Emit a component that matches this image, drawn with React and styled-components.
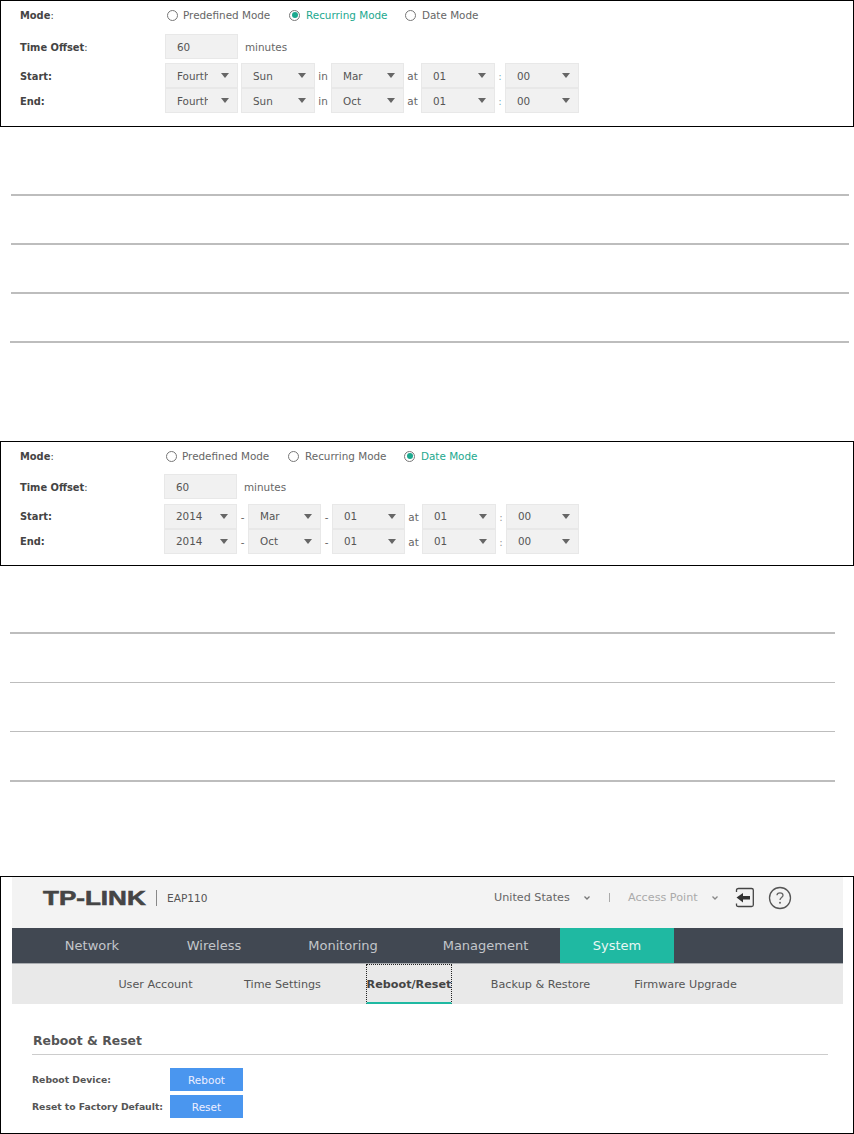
import React from 'react';
import styled, { createGlobalStyle } from 'styled-components';

const Global = createGlobalStyle`
  html, body { margin: 0; padding: 0; background: #fff; }
  body { font-family: "DejaVu Sans", Verdana, sans-serif; font-size: 10px; color: #555; }
`;
const Page = styled.div`display: flex; flex-direction: column; width: 854px; height: 1134px; overflow: hidden;`;
const Panel = styled.section`
  box-sizing: border-box; border: 1px solid #000; width: 854px; height: ${p => p.$h}px; margin-top: ${p => p.$mt}px;
  padding: ${p => p.$pt}px 0 0 19px; display: flex; flex-direction: column;
`;
const ModeRow = styled.div`display: flex; align-items: center; height: 16px; margin-bottom: ${p => p.$mb}px;`;
const Row = styled.div`display: flex; align-items: center; height: ${p => p.$h || 25}px; margin-bottom: ${p => p.$mb || 0}px;`;
const Label = styled.div`width: ${p => p.$w}px; flex: none; font-weight: 700; color: #444; font-size: 9.9px; padding-top: ${p => p.$top || 0}px; span{font-weight:400;}`;
const Radio = styled.div`
  display: flex; align-items: center; width: ${p => p.$w}px; margin-left: ${p => p.$ml || 0}px; flex: none; font-size: 10.4px; white-space: nowrap; color: ${p => p.$on ? '#1ca88e' : '#666'};
`;
const Dot = styled.i`
  box-sizing: border-box; width: 11px; height: 11px; border-radius: 50%; border: 1px solid #777; background: #fff; margin-right: ${p => p.$gap}px; flex: none; position: relative;
  &::after { content: ''; display: ${p => p.$on ? 'block' : 'none'}; position: absolute; inset: 1.5px; border-radius: 50%; background: #1ca88e; }
`;
const Input = styled.div`
  box-sizing: border-box; width: 73px; height: 25px; background: #f1f1f1; border: 1px solid #e8e8e8; padding-left: 11px; font-size: 10.4px; line-height: 24px; color: #555; flex: none;
`;
const Unit = styled.div`margin-left: 7px; padding-top: 1px; font-size: 10.4px; color: #666;`;
const Select = styled.div`
  box-sizing: border-box; position: relative; width: ${p => p.$w || 74}px; height: 25px; flex: none; background: #f1f1f1; border: 1px solid #e8e8e8; padding-left: 11px; font-size: 10.4px; line-height: ${p => p.$lh}px; color: #555;
  &::after { content: ''; position: absolute; right: 8px; top: 9px; border-left: 4.5px solid transparent; border-right: 4.5px solid transparent; border-top: 5.5px solid #666; }
`;
const Clip = styled.span`display: block; width: 31px; overflow: hidden; white-space: nowrap;`;
const Sep = styled.div`width: ${p => p.$w}px; flex: none; text-align: center; padding-top: ${p => p.$top}px; font-size: 10.4px; color: ${p => p.$tone || '#666'};`;

const Rules = styled.div`display: flex; flex-direction: column; margin: ${p => p.$mt}px 0 0 ${p => p.$ml}px; width: ${p => p.$w}px;`;
const Rule = styled.div`height: ${p => p.$t}px; background: #bdbdbd; margin-bottom: ${p => p.$gap}px; margin-left: ${p => p.$in || 0}px;`;

const Frame = styled.section`
  box-sizing: border-box; border: 1px solid #000; width: 854px; height: 258px; margin-top: 94px; padding: 0 10px 0 11px;
`;
const Head = styled.header`box-sizing: border-box; height: 51px; padding: 0 0 10px 31px; background: #f3f3f3; display: flex; align-items: center;`;
const Logo = styled.div`font-family: "Liberation Sans", sans-serif; font-weight: 700; font-size: 20.5px; color: #454545; transform: scaleX(1.27); transform-origin: left; width: 103px; -webkit-text-stroke: .6px #454545; line-height: 20px; white-space: nowrap;`;
const Model = styled.div`border-left: 1px solid #888; margin-left: 10px; padding-left: 10px; height: 16px; line-height: 16px; font-size: 10.6px; color: #555;`;
const HeadRight = styled.div`margin-left: auto; display: flex; align-items: center; margin-right: 51px; font-size: 11.2px; color: #666;`;
const Drop = styled.div`color: ${p => p.$dim ? '#aaa' : '#666'}; width: ${p => p.$w}px; flex: none; white-space: nowrap;`;
const Pipe = styled.div`width: 1px; height: 9px; background: #aaa; margin: 0 18px 0 0;`;
const Nav = styled.nav`box-sizing: border-box; height: 36px; background: #414852; border-bottom: 1px solid #a9acb0; display: flex; padding-left: 19px;`;
const Tab = styled.div`width: ${p => p.$w}px; flex: none; text-align: center; line-height: 35px; font-size: 13px; color: ${p => p.$on ? '#e8f7f4' : '#c3c6ca'}; background: ${p => p.$on ? '#1fb9a2' : 'transparent'};`;
const Sub = styled.div`height: 40px; background: #e9e9e9; display: flex; padding-left: 100px;`;
const SubItem = styled.div`
  box-sizing: border-box; width: ${p => p.$w}px; flex: none; display: flex; justify-content: center; line-height: 41px; font-size: 11.2px; color: #555; white-space: nowrap;
`;
const SubActive = styled(SubItem)`
  font-weight: 700; color: #444; border: 1px dotted #222; border-bottom: 2px solid #1fb9a2; line-height: 39px;
`;
const Content = styled.div`padding: 27px 15px 0 20px;`;
const Title = styled.h2`margin: 0; font-size: 12.4px; font-weight: 700; color: #555; line-height: 20px; padding: 0 0 3px 1px; border-bottom: 1px solid #ccc;`;
const Action = styled.div`display: flex; align-items: center; height: 23px; margin-top: ${p => p.$mt}px;`;
const ActionLabel = styled.div`width: 138px; flex: none; font-size: 9.25px; font-weight: 700; color: #555; white-space: nowrap;`;
const Btn = styled.button`width: 73px; height: 23px; border: 0; padding: 0; background: #4a96ef; color: #eef; font: 10.5px "DejaVu Sans", sans-serif;`;

const Form = ({ mode, labelW, radios, rows, h, mt, pt, modeGap, offsetGap, tone, rowTop, selectLh }) => (
  <Panel $h={h} $mt={mt} $pt={pt}>
    <ModeRow $mb={modeGap}>
      <Label $w={labelW}>Mode<span>:</span></Label>
      {radios.map(r => (
        <Radio key={r.t} $w={r.w} $ml={r.ml} $on={r.t === mode}>
          <Dot $on={r.t === mode} $gap={r.g} />{r.t}
        </Radio>
      ))}
    </ModeRow>
    <Row $mb={offsetGap}>
      <Label $w={labelW} $top={1}>Time Offset<span>:</span></Label>
      <Input>60</Input><Unit>minutes</Unit>
    </Row>
    {rows.map(row => (
      <Row key={row.label}>
        <Label $w={labelW} $top={rowTop}>{row.label}</Label>
        {row.cells.map((c, i) => c.sep !== undefined
          ? <Sep key={i} $w={c.w} $top={rowTop} $tone={c.colon ? tone : undefined}>{c.sep}</Sep>
          : <Select key={i} $w={c.sw} $lh={selectLh}>{c.clip ? <Clip>{c.v}</Clip> : c.v}</Select>)}
      </Row>
    ))}
  </Panel>
);

const recRow = (label, mon) => ({ label, cells: [
  { v: 'Fourth', clip: true, sw: 73 }, { sep: '', w: 3 }, { v: 'Sun' }, { sep: 'in', w: 16 }, { v: mon, sw: 73 },
  { sep: 'at', w: 17 }, { v: '01' }, { sep: ':', w: 10, colon: true }, { v: '00' },
] });
const dateRow = (label, mon) => ({ label, cells: [
  { v: '2014', sw: 73 }, { sep: '-', w: 11 }, { v: mon, sw: 73 }, { sep: '-', w: 11 }, { v: '01', sw: 73 },
  { sep: 'at', w: 17 }, { v: '01' }, { sep: ':', w: 10, colon: true }, { v: '00', sw: 73 },
] });

export default function App() {
  return (
    <Page>
      <Global />
      <Form mode="Recurring Mode" labelW={145} h={127} mt={0} pt={6} modeGap={11} offsetGap={4} tone="#7fb0bd" rowTop={1} selectLh={24}
        radios={[{ t: 'Predefined Mode', w: 122, ml: 2, g: 5 }, { t: 'Recurring Mode', w: 116, g: 6 }, { t: 'Date Mode', w: 80, g: 6 }]}
        rows={[recRow('Start:', 'Mar'), recRow('End:', 'Oct')]} />
      <Rules $mt={67} $ml={10} $w={839}>
        <Rule $t={2} $gap={47} $in={1} /><Rule $t={2} $gap={47} $in={1} /><Rule $t={2} $gap={47} $in={1} /><Rule $t={2} $gap={0} />
      </Rules>
      <Form mode="Date Mode" labelW={144} h={125} mt={98} pt={6} modeGap={10} offsetGap={5} tone="#999" rowTop={0} selectLh={22}
        radios={[{ t: 'Predefined Mode', w: 122, ml: 2, g: 5 }, { t: 'Recurring Mode', w: 116, g: 6 }, { t: 'Date Mode', w: 80, g: 6 }]}
        rows={[dateRow('Start:', 'Mar'), dateRow('End:', 'Oct')]} />
      <Rules $mt={66} $ml={10} $w={825}>
        <Rule $t={2} $gap={48} /><Rule $t={1} $gap={48} /><Rule $t={1} $gap={48} /><Rule $t={2} $gap={0} />
      </Rules>
      <Frame>
        <Head>
          <Logo>TP-LINK</Logo>
          <Model>EAP110</Model>
          <HeadRight>
            <Drop $w={89}>United States</Drop>
            <svg width="8" height="6" viewBox="0 0 8 6" style={{ marginRight: 18 }}><path d="M1.5 1.5 4 4l2.5-2.5" fill="none" stroke="#777" strokeWidth="1.3" /></svg>
            <Pipe />
            <Drop $w={83} $dim>Access Point</Drop>
            <svg width="8" height="6" viewBox="0 0 8 6" style={{ marginRight: 16 }}><path d="M1.5 1.5 4 4l2.5-2.5" fill="none" stroke="#888" strokeWidth="1.3" /></svg>
            <svg width="20" height="21" viewBox="0 0 20 21" style={{ marginRight: 13 }}>
              <path d="M1.5 5V3C1.5 2 2.5 1.5 3.5 1.5h13c1 0 1.8.5 1.8 1.5v15c0 1-.8 1.5-1.8 1.5h-13c-1 0-2-.5-2-1.500v-1.500" fill="none" stroke="#444" strokeWidth="1.3" />
              <path d="M1.5 10.5 8 6v3h7v3.5H8v3z" fill="#333" />
            </svg>
            <svg width="24" height="24" viewBox="0 0 24 24">
              <circle cx="12" cy="12" r="10.5" fill="none" stroke="#555" strokeWidth="1.3" />
              <path d="M9 9.3C9 7.5 10.3 6.8 12 6.8s3 1 3 2.5c0 2.2-3 2.3-3 4.7" fill="none" stroke="#666" strokeWidth="1.3" />
              <circle cx="12" cy="16.8" r="1" fill="#666" />
            </svg>
          </HeadRight>
        </Head>
        <Nav>
          <Tab $w={122}>Network</Tab><Tab $w={122}>Wireless</Tab><Tab $w={136}>Monitoring</Tab><Tab $w={149}>Management</Tab><Tab $w={114} $on>System</Tab>
        </Nav>
        <Sub>
          <SubItem $w={87}>User Account</SubItem>
          <SubItem $w={167}>Time Settings</SubItem>
          <SubActive $w={86}>Reboot/Reset</SubActive>
          <SubItem $w={177}>Backup &amp; Restore</SubItem>
          <SubItem $w={113}>Firmware Upgrade</SubItem>
        </Sub>
        <Content>
          <Title>Reboot &amp; Reset</Title>
          <Action $mt={13}><ActionLabel>Reboot Device:</ActionLabel><Btn>Reboot</Btn></Action>
          <Action $mt={4}><ActionLabel>Reset to Factory Default:</ActionLabel><Btn>Reset</Btn></Action>
        </Content>
      </Frame>
    </Page>
  );
}
